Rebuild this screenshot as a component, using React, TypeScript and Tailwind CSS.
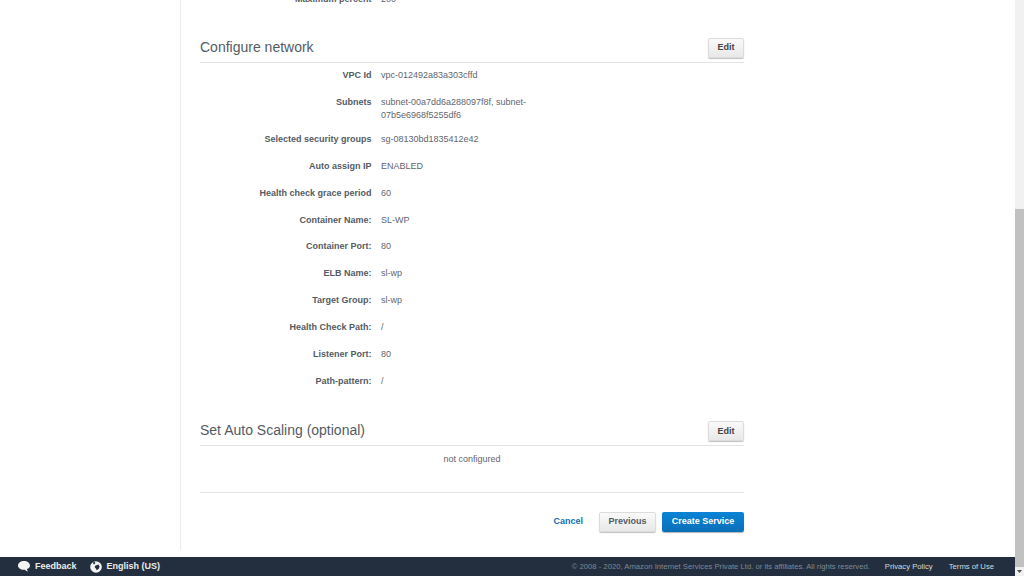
import React from 'react'

const rows = [
  { label: 'VPC Id', value: 'vpc-012492a83a303cffd' },
  { label: 'Subnets', value: 'subnet-00a7dd6a288097f8f, subnet-07b5e6968f5255df6' },
  { label: 'Selected security groups', value: 'sg-08130bd1835412e42' },
  { label: 'Auto assign IP', value: 'ENABLED' },
  { label: 'Health check grace period', value: '60' },
  { label: 'Container Name:', value: 'SL-WP' },
  { label: 'Container Port:', value: '80' },
  { label: 'ELB Name:', value: 'sl-wp' },
  { label: 'Target Group:', value: 'sl-wp' },
  { label: 'Health Check Path:', value: '/' },
  { label: 'Listener Port:', value: '80' },
  { label: 'Path-pattern:', value: '/' },
]

const Row = ({ label, value }: { label: string; value: string }) => (
  <div className="flex min-h-[26.9px] gap-[9.5px] pb-[10px] text-[9px] leading-[13.5px]">
    <div className="w-[171.5px] text-right font-bold text-[#545b64]">{label}</div>
    <div className="w-[150px] text-[#5f666f]">{value}</div>
  </div>
)

const SectionHeader = ({ title }: { title: string }) => (
  <div className="flex h-[25px] items-end justify-between border-b border-[#e1e4e5] pb-[4px]">
    <h2 className="mb-[1px] text-[14px] leading-[20px] text-[#545b64]">{title}</h2>
    <button className="h-[20px] w-[36px] rounded-[2px] border border-[#dcdcdc] bg-gradient-to-b from-[#fafafa] to-[#e8e8e8] text-[9px] font-bold text-[#444] shadow-[0_1px_1px_rgba(0,0,0,0.25)]">
      Edit
    </button>
  </div>
)

export default function App() {
  return (
    <div className="flex h-screen w-full overflow-hidden bg-white font-['Liberation_Sans',Arial,sans-serif]">
      <div className="flex min-w-0 flex-1 flex-col">
        <main className="flex-1 overflow-hidden pl-[180px]">
          <div className="-mt-[7px] h-[557px] w-[564px] border-l border-[#eaeded] pl-[19px]">
            <div className="flex gap-[9.5px] text-[9px] leading-[13.5px]">
              <div className="w-[171.5px] text-right font-bold text-[#545b64]">Maximum percent</div>
              <div className="text-[#5f666f]">200</div>
            </div>
            <div className="mt-[31px] w-[544px]">
              <SectionHeader title="Configure network" />
              <div className="mt-[6.5px] flex flex-col">
                {rows.map((row) => (
                  <Row key={row.label} label={row.label} value={row.value} />
                ))}
              </div>
            </div>
            <div className="mt-[19.5px] w-[544px]">
              <SectionHeader title="Set Auto Scaling (optional)" />
              <p className="mt-[7px] text-center text-[9px] leading-[13.5px] text-[#5f666f]">not configured</p>
              <div className="mt-[25px] border-t border-[#e1e4e5]" />
              <div className="mt-[19px] flex items-center justify-end">
                <a className="text-[9px] font-bold text-[#0f6fb3]">Cancel</a>
                <button className="ml-[16px] h-[20px] w-[57px] rounded-[2px] border border-[#dcdcdc] bg-gradient-to-b from-[#fafafa] to-[#e8e8e8] text-[9px] font-bold text-[#545b64] shadow-[0_1px_1px_rgba(0,0,0,0.25)]">
                  Previous
                </button>
                <button className="ml-[6px] h-[20px] w-[82px] rounded-[2px] bg-gradient-to-b from-[#0a84d6] to-[#0a6fb8] text-[9px] font-bold text-white shadow-[0_1px_1px_rgba(0,0,0,0.3)]">
                  Create Service
                </button>
              </div>
            </div>
          </div>
        </main>
        <footer className="flex h-[19px] shrink-0 items-center justify-between bg-[#232f3e] pl-[18px] pr-[21px] text-[9px]">
          <div className="flex items-center font-bold text-[#eaeded]">
            <svg width="12" height="11" viewBox="0 0 12 11" className="mr-[5px]">
              <path d="M6 0C2.7 0 0 1.9 0 4.4 0 6.8 2.7 8.8 6 8.8c.3 0 .6 0 .9-.1.8 1 1.9 1.6 3.1 1.8-.6-.7-1-1.5-1.1-2.4C10.8 7.4 12 6 12 4.4 12 1.9 9.3 0 6 0z" fill="#f2f3f3" />
            </svg>
            <span>Feedback</span>
            <svg width="12" height="12" viewBox="0 0 12 12" className="ml-[13px] mr-[5px]">
              <circle cx="6" cy="6" r="5.8" fill="#f2f3f3" />
              <path d="M2.6 1.8 4.6.8 5.4 2.2 4 3.4ZM6.4 4.2 8.4 3.6 9.6 5.2 9 7.6 6.8 9.2 5.8 7.4 4.6 6 5.2 4.8Z" fill="#232f3e" />
            </svg>
            <span>English (US)</span>
          </div>
          <div className="flex items-center text-[7.7px]">
            <span className="text-[#7d8998]">© 2008 - 2020, Amazon Internet Services Private Ltd. or its affiliates. All rights reserved.</span>
            <a className="ml-[15px] text-[#d5dbdb]">Privacy Policy</a>
            <a className="ml-[16px] text-[#d5dbdb]">Terms of Use</a>
          </div>
        </footer>
      </div>
      <div className="flex w-[9px] shrink-0 flex-col items-center bg-[#f1f1f1] pt-[209px]">
        <div className="h-[358px] w-full bg-[#c1c1c1]" />
        <svg width="5" height="3" viewBox="0 0 5 3" className="mt-[3px]">
          <path d="M0 0h5L2.5 3z" fill="#505050" />
        </svg>
      </div>
    </div>
  )
}
